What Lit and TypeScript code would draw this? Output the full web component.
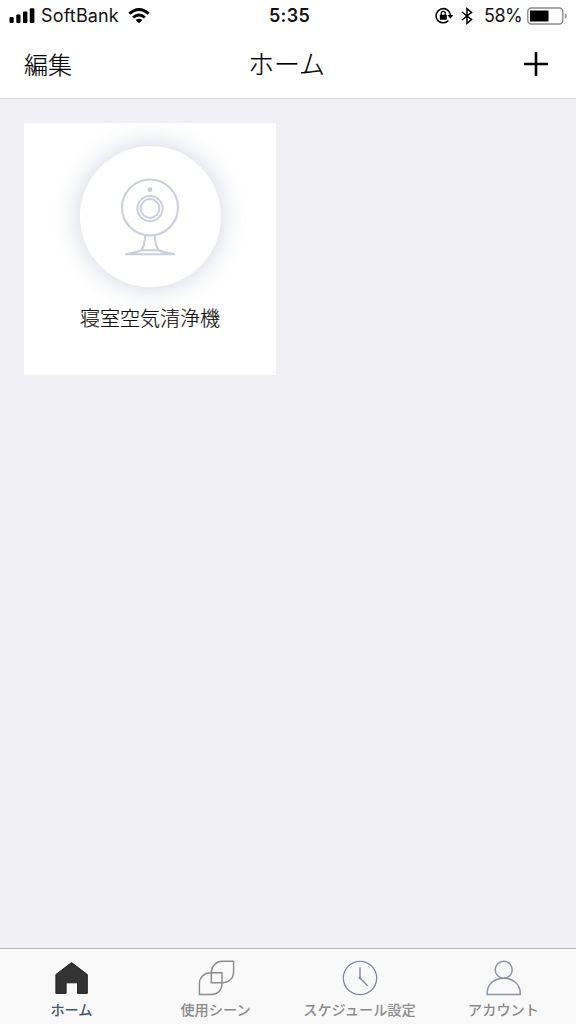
import { LitElement, html, css, svg } from 'lit';
import { customElement, property } from 'lit/decorators.js';
import { classMap } from 'lit/directives/class-map.js';

const glyphs = {
  home: svg`<path d="M17.6 2.6 L33.3 14.5 V33.4 H23.6 V23.8 Q23.6 22.8 22.6 22.8 H13.1 Q12.1 22.8 12.1 23.8 V33.4 H1.9 V14.5 Z" fill="#333" stroke="#222" stroke-width="1" stroke-linejoin="round"/>`,
  scene: svg`<g fill="none" stroke="#8b8b8f" stroke-width="1.4"><path d="M35.6 1.2 V12.2 A10.5 10.5 0 0 1 25.1 22.7 H13.3 V12.2 A11 11 0 0 1 24.3 1.2 Z"/><path d="M1.4 34.5 V23.5 A11 11 0 0 1 12.4 12.7 H24 V24 A10.5 10.5 0 0 1 13.5 34.5 Z"/></g>`,
  clock: svg`<g fill="none" stroke="#838ca0" stroke-width="1.3"><circle cx="18" cy="18" r="16.7"/><path d="M18 7.3 V18 L25.6 25.7" stroke-width="1.4"/></g><circle cx="18" cy="18" r="1.4" fill="#838ca0"/>`,
  account: svg`<g fill="none" stroke="#8c93a4" stroke-width="1.5"><circle cx="17.7" cy="9.7" r="8.5"/><path d="M1.2 34.5 V33 C1.2 24 8.5 18.2 17.7 18.2 S34.2 24 34.2 33 V34.5 Z"/></g>`,
};

@customElement('status-bar')
class StatusBar extends LitElement {
  static styles = css`
    :host { display: grid; grid-template-columns: 1fr auto 1fr; align-items: center; height: 32px; padding: 0 9px; box-sizing: border-box;
      font: 18px/32px Inter, sans-serif; color: #111; }
    .side { display: flex; align-items: center; height: 32px; }
    .right { justify-content: flex-end; }
    svg { display: block; flex: none; }
    .carrier { margin: 0 9px 0 6px; letter-spacing: 0.15px; }
    .time { font-weight: 600; letter-spacing: 0.3px; padding-left: 3px; }
    .bt { margin: 0 11px 0 7px; }
    .pct { margin-right: 5px; letter-spacing: -0.6px; }
  `;
  render() {
    return html`
      <div class="side">
        <svg width="26" height="16" viewBox="0 0 26 16" fill="#000"><rect x=".5" y="9" width="4.2" height="6" rx="1"/><rect x="7.3" y="6.5" width="4.2" height="8.5" rx="1"/><rect x="14" y="3.5" width="4.4" height="11.5" rx="1"/><rect x="20.8" y="0.3" width="4.6" height="14.7" rx="1"/></svg>
        <span class="carrier">SoftBank</span>
        <svg width="22" height="16" viewBox="0 0 22 16"><g fill="none" stroke="#000" stroke-width="2.9"><path d="M1.3 5.7 Q11 -2.7 20.7 5.7"/><path d="M5.1 9.5 Q11 4.6 16.9 9.5"/></g><path d="M7.6 12 Q11 9.3 14.4 12 L11 15.2 Z"/></svg>
      </div>
      <span class="time">5:35</span>
      <div class="side right">
        <svg width="19" height="18" viewBox="0 0 19 18"><path d="M13.4 13.6 A7.1 7.1 0 1 1 15.3 8.5" fill="none" stroke="#000" stroke-width="1.5"/><path d="M12.4 8 H18.4 L15.4 11.8 Z"/><rect x="4.8" y="7.8" width="7" height="4.9" rx=".6"/><path d="M6.3 8 V6.4 A2 2 0 0 1 10.3 6.4 V8" fill="none" stroke="#000" stroke-width="1.3"/></svg>
        <svg class="bt" width="12" height="18" viewBox="0 0 12 18"><path d="M1 5 L10.5 12.6 L6 16.4 V1.6 L10.5 5.4 L1 13" fill="none" stroke="#000" stroke-width="1.5"/></svg>
        <span class="pct">58%</span>
        <svg width="40" height="18" viewBox="0 0 40 18"><rect x=".8" y="1" width="35" height="16" rx="3.5" fill="#fff" stroke="#8c8c8c" stroke-width="1.4"/><rect x="3" y="3.5" width="18.5" height="11"/><path d="M37.8 6.3 Q39.7 7 39.7 9 T37.8 11.7 Z" fill="#8c8c8c"/></svg>
      </div>`;
  }
}

@customElement('device-card')
class DeviceCard extends LitElement {
  @property() name = '';
  static styles = css`
    :host { display: flex; flex-direction: column; align-items: center; width: 252px; height: 252px; padding-top: 23px; box-sizing: border-box; background: #fff; }
    .disc { display: grid; place-items: center; width: 141px; height: 141px; border-radius: 50%; background: #fff; box-shadow: 0 0 26px rgba(100, 114, 155, .32); }
    .name { margin-top: 16px; font: 300 20px/30px "Noto Sans CJK JP", sans-serif; color: #111; -webkit-text-stroke: 0.2px #111; }
  `;
  render() {
    return html`
      <div class="disc">
        <svg width="60" height="80" viewBox="0 0 60 80" fill="none" stroke="#cbcfdc" stroke-width="2.1" stroke-linejoin="round">
          <circle cx="30" cy="30.5" r="28"/><circle cx="30" cy="31.5" r="12.6" stroke-width="2"/><circle cx="30" cy="31.5" r="9.4" stroke-width="2"/>
          <circle cx="30" cy="12.7" r="2.4" fill="#cbcfdc" stroke="none"/>
          <path d="M25.2 58.5 C25 64 24.2 69.5 21.5 73.5 M34.8 58.5 C35 64 35.8 69.5 38.8 73.5 M21.5 73.3 H38.8 C43 75.3 48.5 76 54 77.3 H6 C11.5 76 17 75.3 21.5 73.3 Z"/>
        </svg>
      </div>
      <span class="name">${this.name}</span>`;
  }
}

@customElement('app-root')
class AppRoot extends LitElement {
  private tabs = [
    { icon: glyphs.home, label: 'ホーム', active: true },
    { icon: glyphs.scene, label: '使用シーン', active: false },
    { icon: glyphs.clock, label: 'スケジュール設定', active: false },
    { icon: glyphs.account, label: 'アカウント', active: false },
  ];
  static styles = css`
    :host { display: flex; flex-direction: column; height: 1024px; background: #efeff4; font-family: "Noto Sans CJK JP", sans-serif; overflow: hidden; }
    .top { background: #fff; border-bottom: 1px solid #dcdce1; height: 98px; flex: none; }
    .nav { display: grid; grid-template-columns: 1fr auto 1fr; align-items: center; height: 64px; padding: 0 27px 0 24px; color: #000; font-weight: 300; -webkit-text-stroke: 0.2px #000; }
    .edit { font-size: 24px; line-height: 36px; }
    .title { font-size: 26px; line-height: 38px; padding-bottom: 2px; }
    .add { justify-self: end; display: block; }
    main { flex: 1; padding: 24px; }
    .tabs { display: grid; grid-template-columns: repeat(4, 1fr); height: 75px; flex: none; background: #f9f9f9; border-top: 1px solid #b8b8bd; }
    .tab { display: flex; flex-direction: column; align-items: center; padding-top: 11px; font-size: 14.2px; line-height: 20px; font-weight: 500; color: #8a8a8a; white-space: nowrap; }
    .tab svg { display: block; margin-bottom: 3px; overflow: visible; }
    .tab span { margin-right: 1px; }
    .tab.active { color: #4b556e; }
  `;
  render() {
    return html`
      <div class="top">
        <status-bar></status-bar>
        <div class="nav">
          <span class="edit">編集</span><span class="title">ホーム</span>
          <svg class="add" width="26" height="26" viewBox="0 0 26 26"><path d="M13 1 V25 M1 13 H25" stroke="#000" stroke-width="2.6"/></svg>
        </div>
      </div>
      <main><device-card name="寝室空気清浄機"></device-card></main>
      <nav class="tabs">
        ${this.tabs.map(t => html`<div class=${classMap({ tab: true, active: t.active })}><svg width="36" height="36" viewBox="0 0 36 36">${t.icon}</svg><span>${t.label}</span></div>`)}
      </nav>`;
  }
}
